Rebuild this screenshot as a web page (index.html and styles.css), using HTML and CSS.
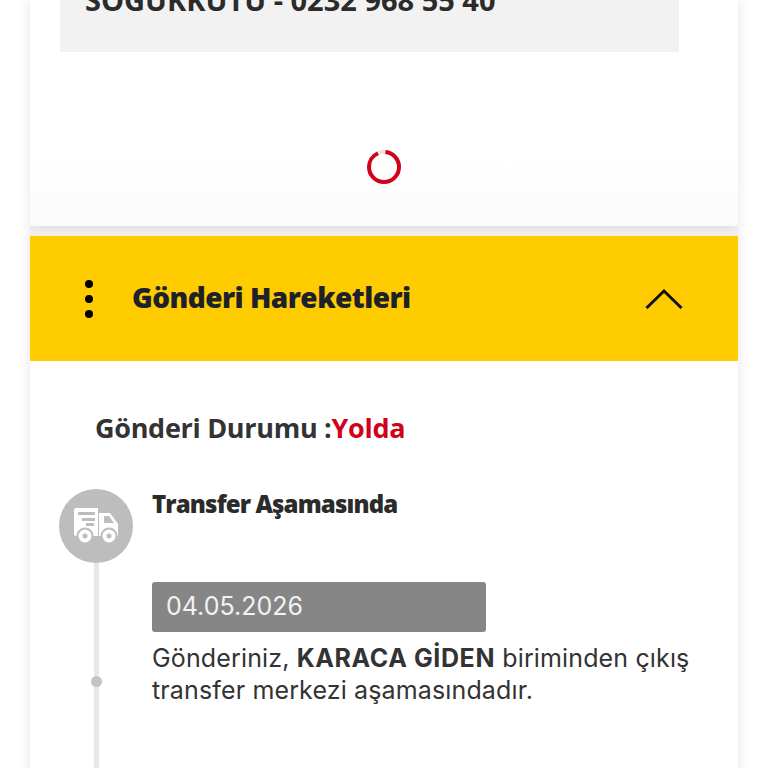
FILE: index.html
```html
<!DOCTYPE html>
<html lang="en">

<head>
    <meta charset="UTF-8">
    <meta name="viewport" content="width=device-width, initial-scale=1.0">
    <title>Gönderi Takip</title>
    <link rel="stylesheet" href="styles.css">
</head>

<body>

    <!-- Top card -->
    <div class="card top-card">
        <div class="note">
            <p class="note-text">SOĞUKKUTU - 0232 968 55 40</p>
        </div>
        <div class="spinner-wrap">
            <svg class="spinner" width="36" height="36" viewBox="0 0 36 36">
                <circle cx="18" cy="18" r="15" fill="none" stroke="#f3e3d3" stroke-width="4"></circle>
                <circle cx="18" cy="18" r="15" fill="none" stroke="#d0021b" stroke-width="4" stroke-dasharray="86 8.25" stroke-dashoffset="-1.5" transform="rotate(-90 18 18)"></circle>
            </svg>
        </div>
    </div>

    <!-- Movements card -->
    <div class="card moves-card">
        <div class="moves-head">
            <div class="dots">
                <span></span>
                <span></span>
                <span></span>
            </div>
            <h2>Gönderi Hareketleri</h2>
            <svg class="chevron" width="38" height="21" viewBox="0 0 38 21">
                <path d="M1.5 20 L19 3 L36.5 20" fill="none" stroke="#111" stroke-width="3"></path>
            </svg>
        </div>

        <div class="moves-body">
            <h3 class="status">Gönderi Durumu :<span>Yolda</span></h3>

            <div class="step">
                <div class="rail">
                    <div class="step-icon">
                        <svg width="46" height="36" viewBox="0 0 46 36">
                            <path fill="#fff" d="M1 2 Q1 0 3 0 H25 V28 H3 Q1 28 1 26 Z"></path>
                            <path fill="#fff" d="M26 5 H37 L45 16 V28 H26 Z"></path>
                            <path fill="#bdbdbd" d="M5 4 H22 V7 H5 Z M9 10 H22 V13 H9 Z M13 15 H21 V18 H13 Z M31 8 H36 L41 15 H31 Z"></path>
                            <circle cx="12" cy="28" r="8.5" fill="#bdbdbd"></circle>
                            <circle cx="12" cy="28" r="6.5" fill="#fff"></circle>
                            <circle cx="12" cy="28" r="2.5" fill="#bdbdbd"></circle>
                            <circle cx="36" cy="28" r="8.5" fill="#bdbdbd"></circle>
                            <circle cx="36" cy="28" r="6.5" fill="#fff"></circle>
                            <circle cx="36" cy="28" r="2.5" fill="#bdbdbd"></circle>
                        </svg>
                    </div>
                    <div class="rail-line"></div>
                    <div class="rail-dot"></div>
                </div>
                <div class="step-info">
                    <h4>Transfer Aşamasında</h4>
                    <div class="date">04.05.2026</div>
                    <p>Gönderiniz, <b>KARACA GİDEN</b> biriminden çıkış transfer merkezi aşamasındadır.</p>
                </div>
            </div>
        </div>
    </div>

</body>

</html>
```

FILE: styles.css
```css
/* General Reset */
* {
    margin: 0;
    padding: 0;
    box-sizing: border-box;
}

body {
    background: #fff;
    height: 768px;
    overflow: hidden;
    padding: 0 30px;
    font-family: Inter, sans-serif;
    color: #333;
}

/* Cards */
.card {
    width: 708px;
    background: #fff;
    box-shadow: 0 0 14px rgba(0, 0, 0, 0.1);
}

.top-card {
    position: relative;
    height: 226px;
    padding-left: 30px;
    border-radius: 0 0 4px 4px;
    background: linear-gradient(#fff 70%, #fbfbfb);
}

.moves-card {
    height: 600px;
    border-top: 10px solid #f1f0ee;
}

/* Grey note */
.note {
    width: 619px;
    height: 52px;
    background: #f2f2f2;
    overflow: hidden;
    padding-left: 25px;
}

.note-text {
    margin-top: -16px;
    font-family: "Open Sans", sans-serif;
    font-size: 29px;
    line-height: 32px;
    font-weight: 700;
    color: #2b2b2b;
}

/* Spinner */
.spinner-wrap {
    display: flex;
    justify-content: center;
    padding: 97px 30px 0 0;
}

/* Yellow header */
.moves-head {
    height: 125px;
    background: #ffcc00;
    display: flex;
    align-items: center;
    padding: 0 55px;
}

.dots {
    display: flex;
    flex-direction: column;
    gap: 7px;
    width: 47px;
}

.dots span {
    width: 8px;
    height: 8px;
    border-radius: 50%;
    background: #000;
}

.moves-head h2 {
    flex: 1;
    margin-top: -4px;
    font-family: "Open Sans", sans-serif;
    font-size: 28px;
    font-weight: 800;
    letter-spacing: -0.53px;
    color: #1d2129;
}

/* Body */
.moves-body {
    padding: 48px 30px 0 29px;
}

.status {
    padding-left: 36px;
    font-family: "Open Sans", sans-serif;
    font-size: 27px;
    line-height: 38px;
    font-weight: 700;
    letter-spacing: -0.3px;
    color: #333;
}

.status span {
    color: #d0021b;
}

/* Timeline step */
.step {
    display: flex;
    margin-top: 42px;
}

.rail {
    position: relative;
    width: 93px;
    flex-shrink: 0;
}

.step-icon {
    width: 74px;
    height: 74px;
    border-radius: 50%;
    background: #bdbdbd;
    display: flex;
    align-items: center;
    justify-content: center;
}

.rail-line {
    position: absolute;
    top: 74px;
    left: 35px;
    width: 5px;
    height: 300px;
    background: #e8e8e8;
}

.rail-dot {
    position: absolute;
    top: 187px;
    left: 32px;
    width: 11px;
    height: 11px;
    border-radius: 50%;
    background: #c4c4c4;
}

.step-info {
    flex: 1;
}

.step-info h4 {
    font-family: "Open Sans", sans-serif;
    font-size: 24px;
    line-height: 30px;
    font-weight: 800;
    letter-spacing: -0.85px;
    color: #2b2b2b;
}

.date {
    width: 334px;
    height: 50px;
    margin-top: 63px;
    padding-left: 14px;
    background: #868686;
    border-radius: 3px;
    color: #f2f2f2;
    font-size: 25px;
    line-height: 48px;
}

.step-info p {
    margin-top: 10px;
    font-size: 25px;
    line-height: 32px;
    letter-spacing: 0.14px;
    color: #333;
}

.step-info p b {
    letter-spacing: 0.6px;
}
```
